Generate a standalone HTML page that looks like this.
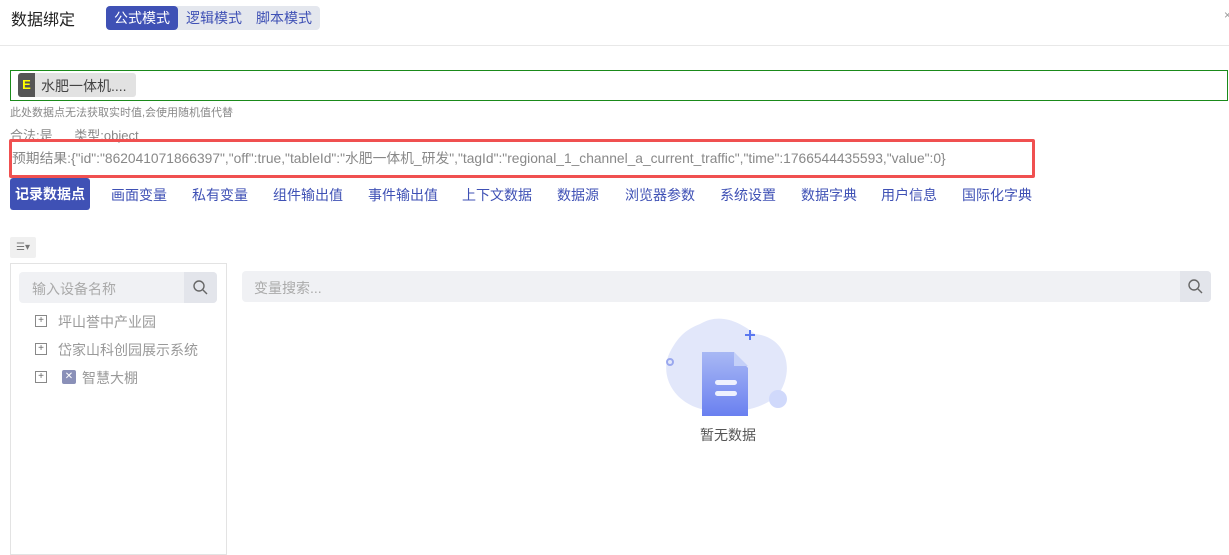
<html><head><style>
body{margin:0;width:1229px;height:546px;overflow:hidden;background:#fff;font-family:"Liberation Sans","Noto Sans CJK SC",sans-serif;position:relative}
.a{position:absolute;white-space:nowrap}
.tab{position:absolute;top:185px;font-size:14px;color:#3f51b5}
</style></head><body>
<div class="a" style="left:11px;top:6px;font-size:16px;color:#222">数据绑定</div>
<div class="a" style="left:106px;top:6px;height:24px;width:214px;background:#e4e7ee;border-radius:4px"></div>
<div class="a" style="left:106px;top:6px;height:24px;width:72px;background:#3f51b5;border-radius:4px;color:#fff;font-size:14px;line-height:24px;text-align:center">公式模式</div>
<div class="a" style="left:186px;top:6px;font-size:14px;line-height:24px;color:#3f51b5">逻辑模式</div>
<div class="a" style="left:256px;top:6px;font-size:14px;line-height:24px;color:#3f51b5">脚本模式</div>
<div class="a" style="left:1224px;top:8px;font-size:12px;color:#999">×</div>
<div class="a" style="left:0;top:45px;width:1229px;height:1px;background:#e8e8e8"></div>
<div class="a" style="left:10px;top:70px;width:1216px;height:29px;border:1px solid #1a8a1a"></div>
<div class="a" style="left:18px;top:73px;width:118px;height:24px;background:#e2e2e2;border-radius:3px"></div>
<div class="a" style="left:18px;top:73px;width:17px;height:24px;background:#555;border-radius:3px 0 0 3px;color:#ff0;font-weight:bold;font-size:13px;line-height:24px;text-align:center">E</div>
<div class="a" style="left:41px;top:76px;font-size:14px;color:#444">水肥一体机....</div>
<div class="a" style="left:10px;top:104px;font-size:11px;color:#888">此处数据点无法获取实时值,会使用随机值代替</div>
<div class="a" style="left:10px;top:125px;font-size:13px;color:#888">合法:是&nbsp;&nbsp;&nbsp;&nbsp;&nbsp;&nbsp;类型:object</div>
<div class="a" style="left:9px;top:139px;width:1020px;height:33px;border:3px solid #f05050;border-radius:2px"></div>
<div class="a" style="left:12px;top:147px;font-size:13.8px;color:#888">预期结果:{"id":"862041071866397","off":true,"tableId":"水肥一体机_研发","tagId":"regional_1_channel_a_current_traffic","time":1766544435593,"value":0}</div>
<div class="a" style="left:10px;top:178px;width:80px;height:32px;background:#3f51b5;border-radius:3px;color:#fff;font-size:14px;font-weight:bold;line-height:32px;text-align:center">记录数据点</div>
<div class="tab" style="left:111px">画面变量</div><div class="tab" style="left:192px">私有变量</div><div class="tab" style="left:273px">组件输出值</div><div class="tab" style="left:368px">事件输出值</div><div class="tab" style="left:462px">上下文数据</div><div class="tab" style="left:557px">数据源</div><div class="tab" style="left:625px">浏览器参数</div><div class="tab" style="left:720px">系统设置</div><div class="tab" style="left:801px">数据字典</div><div class="tab" style="left:881px">用户信息</div><div class="tab" style="left:962px">国际化字典</div>
<div class="a" style="left:10px;top:237px;width:26px;height:21px;background:#f0f0f0;border-radius:2px;font-size:10px;color:#777;line-height:21px;text-align:center">☰▾</div>
<div class="a" style="left:10px;top:263px;width:215px;height:290px;border:1px solid #e3e3e3"></div>
<div class="a" style="left:19px;top:272px;width:198px;height:31px;background:#f0f1f4;border-radius:4px"></div>
<div class="a" style="left:184px;top:272px;width:33px;height:31px;background:#e3e5eb;border-radius:0 4px 4px 0"></div>
<div class="a" style="left:32px;top:279px;font-size:14px;color:#aaa">输入设备名称</div>
<svg class="a" style="left:192px;top:279px" width="17" height="17"><circle cx="7" cy="7" r="5" fill="none" stroke="#666" stroke-width="1.4"/><line x1="11" y1="11" x2="15" y2="15" stroke="#666" stroke-width="1.4"/></svg>
<div class="a" style="left:35px;top:315px;width:10px;height:10px;border:1px solid #888;font-size:10px;line-height:10px;text-align:center;color:#666">+</div>
<div class="a" style="left:58px;top:312px;font-size:14px;color:#999">坪山誉中产业园</div>
<div class="a" style="left:35px;top:343px;width:10px;height:10px;border:1px solid #888;font-size:10px;line-height:10px;text-align:center;color:#666">+</div>
<div class="a" style="left:58px;top:340px;font-size:14px;color:#999">岱家山科创园展示系统</div>
<div class="a" style="left:35px;top:371px;width:10px;height:10px;border:1px solid #888;font-size:10px;line-height:10px;text-align:center;color:#666">+</div>
<div class="a" style="left:62px;top:370px;width:14px;height:14px;background:#8a90b8;border-radius:2px;color:#fff;font-size:10px;line-height:14px;text-align:center">✕</div>
<div class="a" style="left:82px;top:368px;font-size:14px;color:#999">智慧大棚</div>
<div class="a" style="left:242px;top:271px;width:969px;height:31px;background:#f0f1f4;border-radius:4px"></div>
<div class="a" style="left:1180px;top:271px;width:31px;height:31px;background:#e3e5eb;border-radius:0 4px 4px 0"></div>
<div class="a" style="left:254px;top:278px;font-size:14px;color:#aaa">变量搜索...</div>
<svg class="a" style="left:1187px;top:278px" width="17" height="17"><circle cx="7" cy="7" r="5" fill="none" stroke="#666" stroke-width="1.4"/><line x1="11" y1="11" x2="15" y2="15" stroke="#666" stroke-width="1.4"/></svg>
<svg class="a" style="left:660px;top:312px" width="135" height="105">
<defs><linearGradient id="g" x1="0" y1="0" x2="0" y2="1"><stop offset="0" stop-color="#a8b8f4"/><stop offset="1" stop-color="#6a80f0"/></linearGradient></defs>
<path d="M40 12 C60 0 80 10 95 22 C125 25 135 55 120 80 C105 100 60 105 35 95 C10 85 0 60 10 40 C18 25 25 18 40 12Z" fill="#e2e7fa"/>
<circle cx="10" cy="50" r="3" fill="none" stroke="#9aa8ee" stroke-width="2"/>
<path d="M90 18v10M85 23h10" stroke="#5b78f0" stroke-width="2"/>
<circle cx="118" cy="87" r="9" fill="#d0d9fb"/>
<path d="M42 40h32l14 16v48h-46z" fill="url(#g)"/>
<path d="M74 40v14h14z" fill="#c4d0f8"/>
<rect x="55" y="68" width="22" height="5" rx="2.5" fill="#eef1fe"/><rect x="55" y="79" width="22" height="5" rx="2.5" fill="#eef1fe"/>
</svg>
<div class="a" style="left:700px;top:425px;font-size:14px;color:#555">暂无数据</div>
</body></html>
